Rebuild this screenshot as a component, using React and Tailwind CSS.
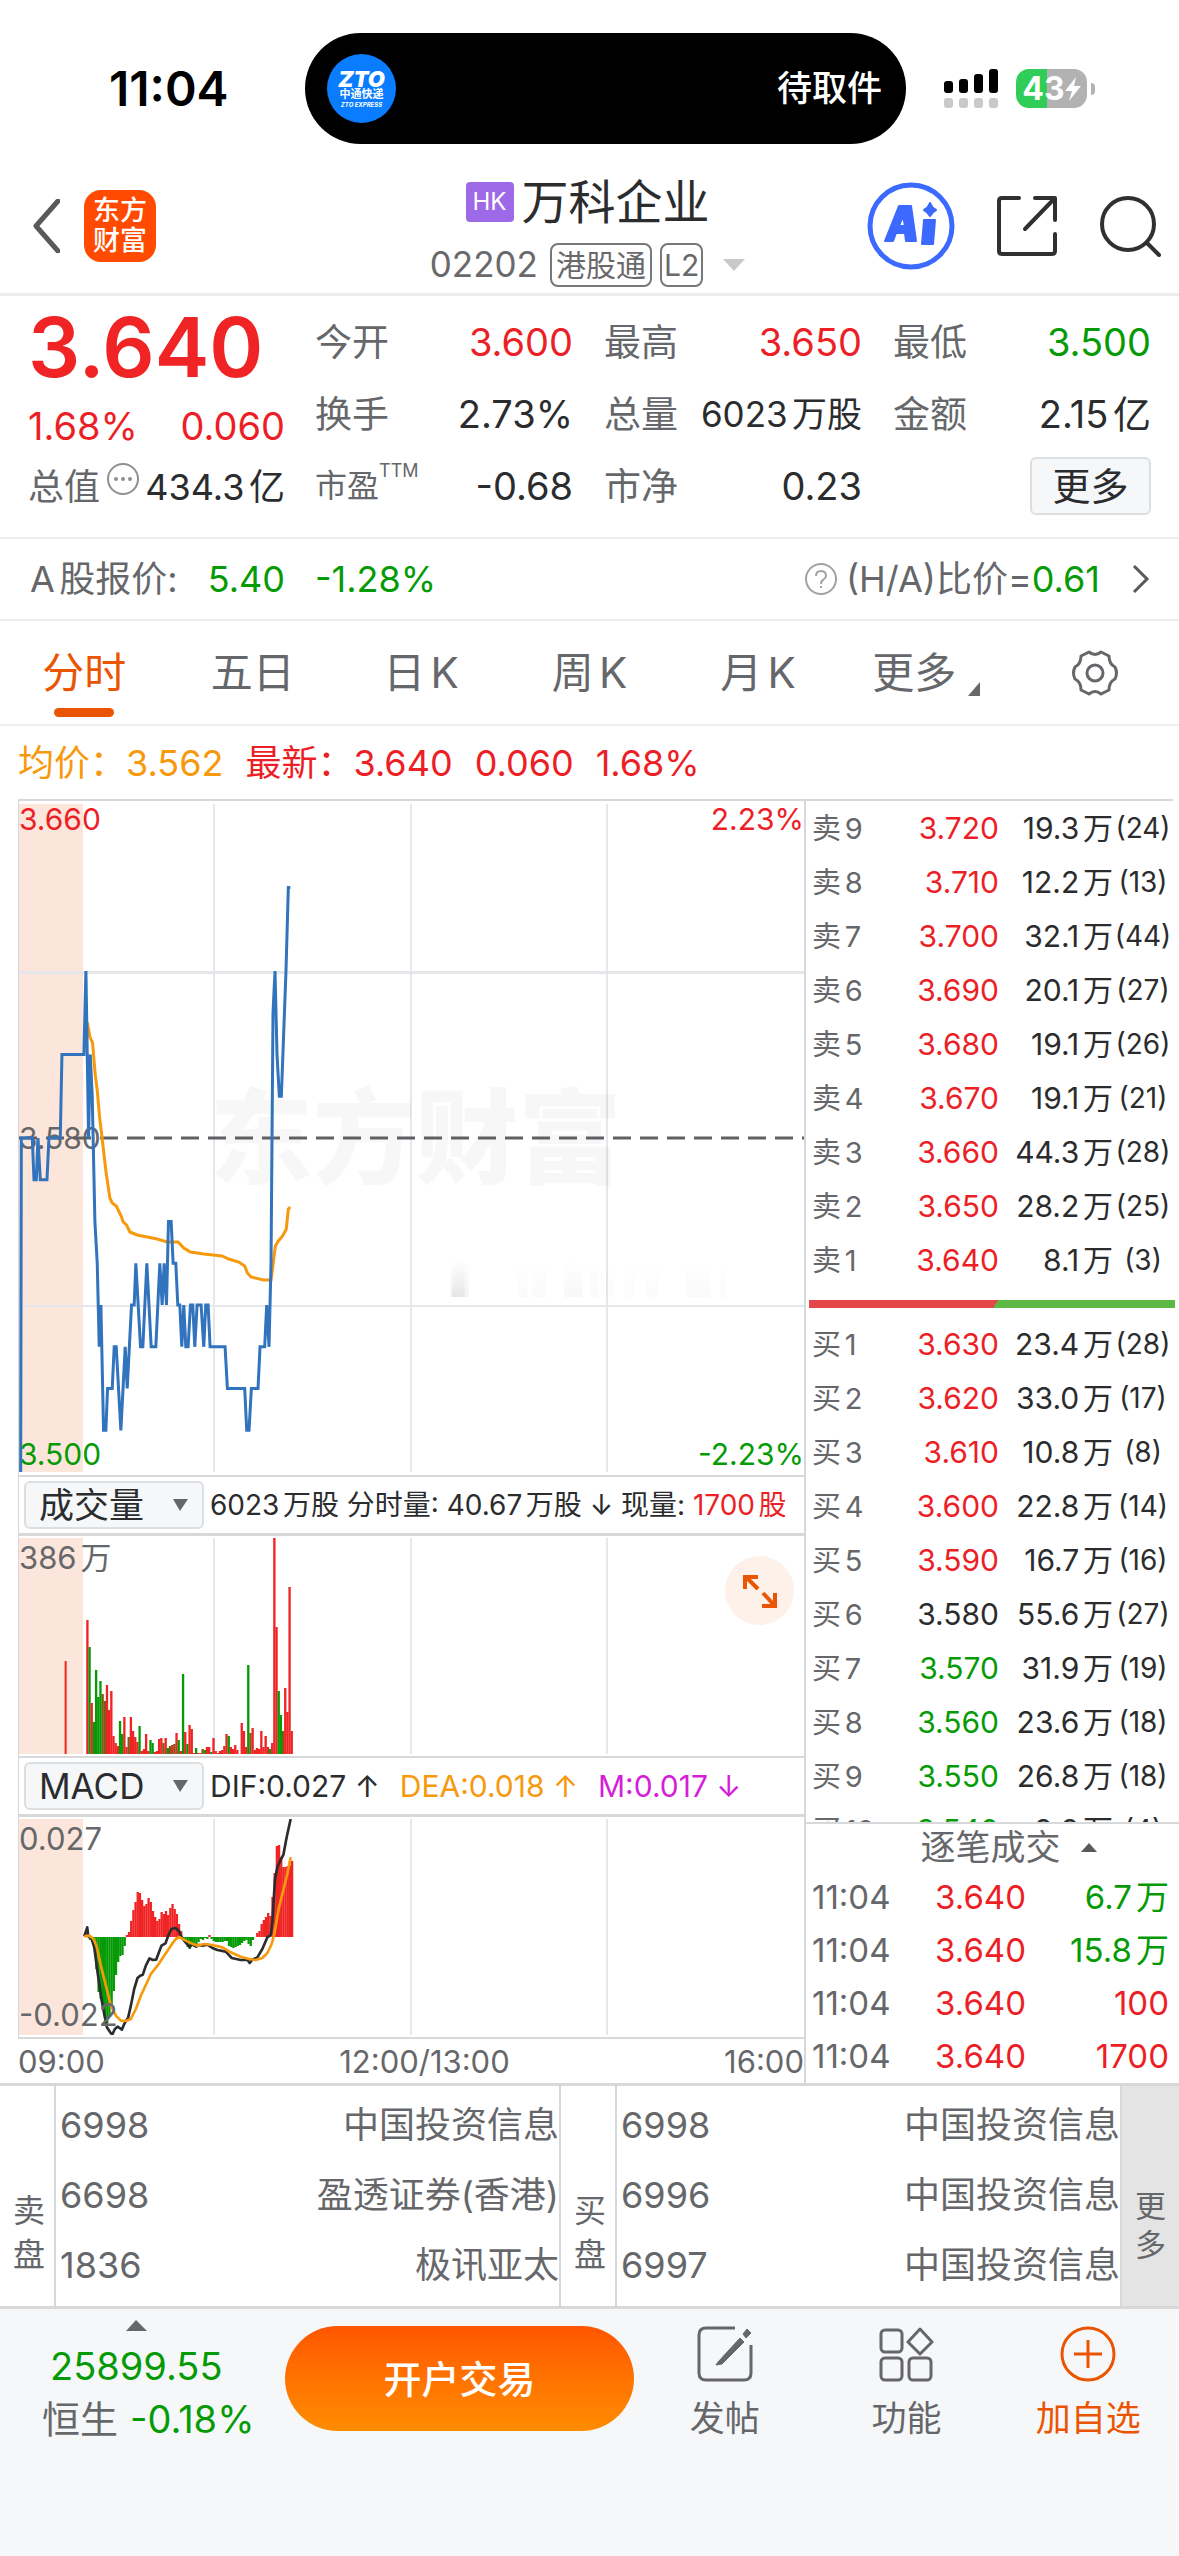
import React, { useState } from "react";

const RED = "#f02424";
const GREEN = "#069b06";
const MIXED = "#7a5c12";
const ORANGE = "#f7990c";

const tones = {
  up: "text-[#ec1f27]",
  down: "text-[#069b06]",
  flat: "text-[#2b2c2e]",
};

const quoteStats = [
  { label: "今开", value: "3.600", tone: "up" },
  { label: "最高", value: "3.650", tone: "up" },
  { label: "最低", value: "3.500", tone: "down" },
  { label: "换手", value: "2.73%", tone: "flat" },
  { label: "总量", value: "6023万股", tone: "flat", small: true },
  { label: "金额", value: "2.15亿", tone: "flat" },
  { label: "市盈", sup: "TTM", value: "-0.68", tone: "flat" },
  { label: "市净", value: "0.23", tone: "flat" },
];

const periods = ["分时", "五日", "日K", "周K", "月K", "更多"];

const sellOrders = [
  ["卖9", "3.720", "19.3万", "(24)", "up"],
  ["卖8", "3.710", "12.2万", "(13)", "up"],
  ["卖7", "3.700", "32.1万", "(44)", "up"],
  ["卖6", "3.690", "20.1万", "(27)", "up"],
  ["卖5", "3.680", "19.1万", "(26)", "up"],
  ["卖4", "3.670", "19.1万", "(21)", "up"],
  ["卖3", "3.660", "44.3万", "(28)", "up"],
  ["卖2", "3.650", "28.2万", "(25)", "up"],
  ["卖1", "3.640", "8.1万", "(3)", "up"],
];

const buyOrders = [
  ["买1", "3.630", "23.4万", "(28)", "up"],
  ["买2", "3.620", "33.0万", "(17)", "up"],
  ["买3", "3.610", "10.8万", "(8)", "up"],
  ["买4", "3.600", "22.8万", "(14)", "up"],
  ["买5", "3.590", "16.7万", "(16)", "up"],
  ["买6", "3.580", "55.6万", "(27)", "flat"],
  ["买7", "3.570", "31.9万", "(19)", "down"],
  ["买8", "3.560", "23.6万", "(18)", "down"],
  ["买9", "3.550", "26.8万", "(18)", "down"],
  ["买10", "3.540", "9.9万", "(4)", "down"],
];

const trades = [
  ["11:04", "3.640", "6.7万", "down"],
  ["11:04", "3.640", "15.8万", "down"],
  ["11:04", "3.640", "100", "up"],
  ["11:04", "3.640", "1700", "up"],
];

const sellBrokers = [
  ["6998", "中国投资信息"],
  ["6698", "盈透证券(香港)"],
  ["1836", "极讯亚太"],
];

const buyBrokers = [
  ["6998", "中国投资信息"],
  ["6996", "中国投资信息"],
  ["6997", "中国投资信息"],
];

// [time offset, price in thousandths]
const pricePoints = [
  [60, 3500], [62, 3580], [95, 3580], [100, 3570], [107, 3570], [112, 3580], [119, 3570],
  [139, 3570], [145, 3580], [179, 3580], [184, 3600], [250, 3600], [256, 3620], [264, 3580],
  [269, 3600], [275, 3590], [283, 3560], [290, 3550], [296, 3530], [301, 3540], [309, 3510],
  [316, 3510], [321, 3520], [335, 3520], [341, 3530], [347, 3530], [361, 3510], [374, 3530],
  [380, 3520], [393, 3540], [401, 3540], [406, 3550], [420, 3530], [427, 3530], [439, 3550],
  [452, 3530], [466, 3530], [478, 3550], [485, 3540], [491, 3550], [498, 3540], [504, 3560],
  [512, 3560], [518, 3550], [526, 3550], [532, 3540], [538, 3540], [544, 3530], [550, 3540],
  [556, 3530], [563, 3530], [570, 3540], [577, 3540], [583, 3530], [590, 3540], [602, 3540],
  [610, 3530], [616, 3540], [623, 3540], [629, 3530], [674, 3530], [681, 3520], [733, 3520],
  [739, 3510], [746, 3510], [753, 3520], [773, 3520], [779, 3530], [793, 3530], [799, 3540],
  [806, 3530], [812, 3550], [818, 3610], [824, 3620], [830, 3600], [837, 3590], [843, 3590],
  [857, 3620], [864, 3640], [870, 3640],
];

const avgLine =
  "260,218 268,233 276,239 284,271 290,286 297,313 306,338 316,367 328,394 335,399 347,402 362,412 368,418 378,421 388,428 410,431 440,433 470,435 500,438 533,438 550,444 570,448 610,450 665,452 685,455 715,458 733,462 741,469 752,473 790,476 812,476 818,461 825,442 834,437 847,432 858,425 864,405 870,403";

// r = up, g = down, m = mixed
const volumes =
  "r134 g107 r51 g32 g84 g57 g73 m60 m53 r69 r44 r63 r18 r11 r8 g33 g20 r37 r7 m17 r37 r23 r17 r12 g28 r3 r5 r20 r3 g14 g11 r2 r3 r15 r16 m11 r16 g6 m8 r9 m10 r21 g14 r3 g80 r22 g10 r29 r25 r1 g6 r1 r1 m5 g4 r7 r7 g2 r16 r3 r1 r3 r4 r8 r20 g18 r7 r5 r9 r4 r0 r31 r23 r7 g89 m21 r26 r4 r6 r5 r23 r7 r18 r7 g5 r11 r216 r127 g63 g39 m23 r66 r42 r167 r23".split(
    " "
  );

const macdBars = [
  6, -3, -5, -12, -32, -55, -62, -72, -80, -86, -80, -68, -54, -38, -25, -19, -18, -9, 2, 5, 16,
  27, 35, 45, 44, 37, 31, 33, 39, 35, 26, 20, 16, 18, 25, 23, 26, 22, 29, 33, 28, 23, 13, 6, -2,
  -6, -10, -12, -9, -10, -8, -5, -2, -3, -1, -2, 2, -2, -4, -5, -5, -5, -5, -4, -4, -9, -10, -11,
  -10, -9, -8, -6, -4, -3, -7, -9, -3, 0, 4, 6, 13, 17, 20, 24, 21, 40, 64, 91, 92, 80, 70, 70,
  71, 72, 76,
];

const difLine =
  "40,412 49,385 52,412 62,418 70,445 80,520 90,590 100,645 108,685 118,700 124,707 132,690 140,683 148,688 153,692 160,675 172,655 180,620 190,570 200,537 208,530 216,527 225,500 236,478 246,483 256,482 265,458 272,440 284,433 293,408 302,390 314,387 325,397 330,410 340,425 356,444 366,435 376,443 385,438 395,440 410,437 425,447 440,453 465,458 483,477 510,483 530,482 537,492 545,482 560,475 575,450 590,415 600,408 605,370 608,320 613,240 620,205 630,182 638,168 648,115 660,60";

const deaLine =
  "40,412 55,410 68,420 78,445 90,500 105,560 120,620 135,650 150,665 165,666 180,660 195,630 210,590 225,558 240,525 260,500 280,470 300,440 315,420 325,414 345,425 360,432 380,440 400,435 425,438 455,445 480,460 510,473 535,480 555,483 575,477 590,462 603,435 612,400 625,325 640,265 650,225 660,175";

const barColor = { r: RED, g: GREEN, m: MIXED };

function StatusBar() {
  return (
    <div className="flex h-[147px] items-center pt-[30px]">
      <div className="w-[305px] pl-[109px] text-[48px] font-semibold leading-none text-black">11:04</div>
      <div className="flex h-[111px] flex-1 items-center justify-between rounded-full bg-black pl-[22px] pr-6">
        <div className="flex size-[69px] flex-col items-center justify-center rounded-full bg-[#0a7cff] text-white">
          <span className="text-[22px] font-black italic leading-[18px]">ZTO</span>
          <span className="text-[11px] font-bold leading-[13px]">中通快递</span>
          <span className="text-[6px] font-bold italic leading-[7px]">ZTO EXPRESS</span>
        </div>
        <span className="text-[35px] font-medium text-white">待取件</span>
      </div>
      <div className="flex w-[273px] items-center gap-[18px] pl-[38px]">
        <svg width="54" height="39" viewBox="0 0 54 39" aria-label="信号">
          <g fill="#000">
            <rect x="0" y="12" width="9" height="12" rx="3" />
            <rect x="15" y="10" width="9" height="14" rx="3" />
            <rect x="30" y="5" width="9" height="19" rx="3" />
            <rect x="45" y="0" width="9" height="24" rx="3" />
          </g>
          <g fill="#c9c9c9">
            <rect x="0" y="29" width="9" height="10" rx="3" />
            <rect x="15" y="29" width="9" height="10" rx="3" />
            <rect x="30" y="29" width="9" height="10" rx="3" />
            <rect x="45" y="29" width="9" height="10" rx="3" />
          </g>
        </svg>
        <div className="flex items-center gap-1">
          <div className="flex h-[39px] w-[71px] items-center justify-center rounded-[13px] bg-[linear-gradient(90deg,#30cd58_44%,#b2b2b2_44%)] text-[32px] font-bold leading-none text-white">
            43
            <svg width="16" height="26" viewBox="0 0 16 26" fill="#fff">
              <path d="M11 1 0 15h7L4 25 16 10H9z" />
            </svg>
          </div>
          <div className="h-3 w-1 rounded-r-full bg-[#b2b2b2]" />
        </div>
      </div>
    </div>
  );
}

function Header() {
  return (
    <header className="grid h-[149px] grid-cols-[1fr_auto_1fr] items-center border-b-[3px] border-[#ededed]">
      <div className="flex items-center gap-6 pl-8 pt-3">
        <button type="button" aria-label="返回">
          <svg width="28" height="54" viewBox="0 0 28 54" fill="none" stroke="#58595b" strokeWidth="5">
            <path d="M26 2 4 27l22 25" strokeLinejoin="round" strokeLinecap="round" />
          </svg>
        </button>
        <div className="flex size-[72px] flex-col items-center justify-center rounded-[17px] bg-[#ff4a00] text-[27px] font-medium leading-[30px] text-white">
          <span>东方</span>
          <span>财富</span>
        </div>
      </div>
      <div className="flex flex-col items-center gap-[19px] pr-1 pt-[26px]">
        <div className="flex h-11 items-center gap-2">
          <span className="flex h-10 w-12 items-center justify-center rounded-[4px] bg-[#9d69e6] text-[24px] text-white">HK</span>
          <h1 className="text-[47px] leading-none text-[#2b2c2e]">万科企业</h1>
        </div>
        <div className="flex h-11 items-center gap-2 text-[35px] leading-none text-[#69696b]">
          <span className="pr-1">02202</span>
          <span className="flex h-11 items-center rounded-[8px] border-2 border-[#77787a] px-1 text-[30px]">港股通</span>
          <span className="flex h-11 items-center rounded-[8px] border-2 border-[#77787a] px-[2px] text-[30px]">L2</span>
          <svg className="ml-3" width="22" height="12" viewBox="0 0 22 12" fill="#c9c9c9">
            <path d="M0 0h22L11 12z" />
          </svg>
        </div>
      </div>
      <div className="flex items-center justify-end gap-[42px] pr-[18px] pt-3">
        <button type="button" aria-label="Ai">
          <svg width="88" height="88" viewBox="0 0 88 88">
            <circle cx="44" cy="44" r="41" fill="none" stroke="#3c69ff" strokeWidth="5" />
            <g fill="#3c69ff" stroke="#3c69ff" strokeWidth="2" strokeLinejoin="round">
              <path
                fillRule="evenodd"
                d="M32 24h12l5 35h-10l-1-8h-9l-3 8H18zM36 34l-4 10h6z"
              />
              <path d="M57 38h11l-2 24H55z" />
              <path d="M63 21q2 5 6 7-4 2-6 6-2-4-6-6 4-2 6-7z" />
            </g>
          </svg>
        </button>
        <button type="button" aria-label="分享">
          <svg width="60" height="60" viewBox="0 0 60 60" fill="none" stroke="#2f3032" strokeWidth="4" strokeLinecap="round" strokeLinejoin="round">
            <path d="M22 2H5Q2 2 2 5v50q0 3 3 3h50q3 0 3-3V38" />
            <path d="M38 2h20v22M57 3 28 33" />
          </svg>
        </button>
        <button type="button" aria-label="搜索">
          <svg width="62" height="62" viewBox="0 0 62 62" fill="none" stroke="#2f3032" strokeWidth="4" strokeLinecap="round">
            <circle cx="29" cy="29" r="26" />
            <path d="m48 48 12 12" />
          </svg>
        </button>
      </div>
    </header>
  );
}

function QuotePanel() {
  return (
    <section className="flex border-b-2 border-[#ededed] px-[28px] pb-[15px] pt-[10px] leading-none">
      <div className="w-[257px] shrink-0">
        <div className="flex h-[84px] items-center text-[82px] font-semibold text-[#f02424]">3.640</div>
        <div className="flex h-[72px] items-center justify-between text-[38px] text-[#ec1f27]">
          <span>1.68%</span>
          <span>0.060</span>
        </div>
        <div className="flex h-[50px] items-center justify-between">
          <span className="text-[36px] text-[#66676a]">总值</span>
          <svg className="mb-4" width="32" height="32" viewBox="0 0 32 32" fill="none" stroke="#8e8f91" strokeWidth="2">
            <circle cx="16" cy="16" r="15" />
            <path d="M9 16h0M16 16h0M23 16h0" strokeWidth="4" strokeLinecap="round" />
          </svg>
          <span className="text-[36px] text-[#2b2c2e]">434.3亿</span>
        </div>
      </div>
      <dl className="ml-[30px] grid flex-1 grid-cols-3 gap-x-[31px]">
        {quoteStats.map((s) => (
          <div key={s.label} className="flex h-[72px] items-center justify-between whitespace-nowrap">
            <dt className={`flex text-[#66676a] ${s.sup ? "text-[32px]" : "text-[37px]"}`}>
              {s.label}
              {s.sup && <span className="-mt-2 text-[18px]">{s.sup}</span>}
            </dt>
            <dd className={`${tones[s.tone]} ${s.small ? "text-[35px]" : "text-[38px]"}`}>{s.value}</dd>
          </div>
        ))}
        <div className="flex h-[72px] items-center justify-end">
          <button type="button" className="h-[58px] w-[121px] rounded-[6px] border-2 border-[#dcdfe2] bg-[#f6f7f9] text-[38px] text-[#2b2c2e]">
            更多
          </button>
        </div>
      </dl>
    </section>
  );
}

function ShareCompare() {
  return (
    <section className="flex h-[82px] items-center justify-between border-b-2 border-[#ededed] pl-[30px] pr-[29px] text-[36px] leading-none">
      <div className="flex gap-[30px]">
        <span className="text-[#66676a]">A股报价:</span>
        <span className="text-[#069b06]">5.40</span>
        <span className="text-[#069b06]">-1.28%</span>
      </div>
      <a href="#compare" className="flex items-center">
        <svg className="mr-2" width="34" height="34" viewBox="0 0 34 34" fill="none" stroke="#a0a1a3" strokeWidth="2">
          <circle cx="17" cy="17" r="15" />
          <path d="M12 14q0-5 5-5t5 5q0 2-3 4-2 1-2 4M17 24v2" />
        </svg>
        <span className="text-[#66676a]">(H/A)比价=</span>
        <span className="text-[#069b06]">0.61</span>
        <svg className="ml-8" width="18" height="30" viewBox="0 0 18 30" fill="none" stroke="#58595b" strokeWidth="3">
          <path d="m2 2 13 13L2 28" />
        </svg>
      </a>
    </section>
  );
}

function PeriodTabs() {
  const [active, setActive] = useState("分时");

  return (
    <nav className="grid h-[105px] grid-cols-7 border-b-2 border-[#ededed] text-[42px] leading-none">
      {periods.map((p) => (
        <button
          key={p}
          type="button"
          onClick={() => setActive(p)}
          className={`relative flex items-center justify-center ${
            active === p ? "text-[#ea5504]" : "text-[#66676a]"
          }`}
        >
          {p}
          {p === "更多" && (
            <svg className="ml-3 mt-8" width="12" height="14" viewBox="0 0 12 14" fill="#66676a">
              <path d="M12 0v14H0z" />
            </svg>
          )}
          {active === p && <span className="absolute bottom-[7px] h-[9px] w-[60px] rounded-full bg-[#ea5504]" />}
        </button>
      ))}
      <button type="button" aria-label="设置" className="flex items-center justify-center">
        <svg width="50" height="46" viewBox="0 0 50 46" fill="none" stroke="#66676a" strokeWidth="3" strokeLinejoin="round">
          <path d="M19 2q6 5 12 0l8 4q0 8 6 11 3 6 0 12-6 3-6 11l-8 4q-6-5-12 0l-8-4q0-8-6-11-3-6 0-12 6-3 6-11z" />
          <circle cx="25" cy="23" r="8" />
        </svg>
      </button>
    </nav>
  );
}

function GridLines() {
  return (
    <div className="absolute inset-0 grid grid-cols-4">
      <div className="border-r-2 border-[#e6e7ea]" />
      <div className="border-r-2 border-[#e6e7ea]" />
      <div className="border-r-2 border-[#e6e7ea]" />
    </div>
  );
}

function PriceChart() {
  const points = pricePoints.map(([x, p]) => `${x},${((3660 - p) * 4.175).toFixed(1)}`).join(" ");

  return (
    <div className="py-[3px]">
      <div className="relative h-[668px] text-[30px] leading-none">
        <div className="absolute inset-y-0 left-0 w-[64px] bg-[#fce6db]" />
        <GridLines />
        <div className="absolute inset-x-0 top-1/4 border-t-[3px] border-[#e6e7ea]" />
        <div className="absolute inset-x-0 top-3/4 border-t-2 border-[#e6e7ea]" />
        <div className="absolute inset-x-0 top-1/2 flex -translate-y-1/2 justify-center pl-2 text-[103px] font-black text-black/3">
          东方财富
        </div>
        <svg className="absolute inset-0 h-full w-full" viewBox="0 0 786 668" preserveAspectRatio="none">
          <defs>
            <linearGradient id="smear" x1="0" y1="0" x2="0" y2="1">
              <stop offset="0" stopColor="#000" stopOpacity="0" />
              <stop offset="1" stopColor="#000" stopOpacity="0.05" />
            </linearGradient>
          </defs>
          <g fill="url(#smear)">
            <rect x="432" y="456" width="18" height="37" />
            <rect x="434" y="456" width="12" height="37" />
            <rect x="500" y="456" width="9" height="37" opacity="0.4" />
            <rect x="514" y="456" width="14" height="37" opacity="0.4" />
            <rect x="546" y="456" width="18" height="37" opacity="0.6" />
            <rect x="572" y="456" width="8" height="37" opacity="0.4" />
            <rect x="588" y="456" width="8" height="37" opacity="0.3" />
            <rect x="606" y="456" width="10" height="37" opacity="0.3" />
            <rect x="628" y="456" width="12" height="37" opacity="0.3" />
            <rect x="668" y="456" width="24" height="37" opacity="0.4" />
            <rect x="702" y="456" width="6" height="37" opacity="0.4" />
          </g>
        </svg>
        <span className="absolute left-0 top-0 text-[#ec1f27]">3.660</span>
        <span className="absolute right-0 top-0 text-[#ec1f27]">2.23%</span>
        <span className="absolute left-0 top-1/2 -translate-y-1/2 text-[#66676a]">3.580</span>
        <span className="absolute bottom-[3px] left-0 text-[#069b06]">3.500</span>
        <span className="absolute bottom-[3px] right-0 text-[#069b06]">-2.23%</span>
        <svg className="absolute inset-0 h-full w-full" viewBox="55 0 2358 668" preserveAspectRatio="none" fill="none">
          <path d="M55 334H2413" stroke="#5f6063" strokeWidth="3" strokeDasharray="18 9" vectorEffect="non-scaling-stroke" />
          <polyline points={avgLine} stroke={ORANGE} strokeWidth="3" vectorEffect="non-scaling-stroke" />
          <polyline points={points} stroke="#3173bd" strokeWidth="3" vectorEffect="non-scaling-stroke" />
        </svg>
      </div>
    </div>
  );
}

function VolumeChart() {
  return (
    <div className="py-[2px]">
      <div className="relative h-[216px] text-[32px] leading-none">
        <div className="absolute inset-y-0 left-0 w-[64px] bg-[#fce6db]" />
        <GridLines />
        <svg className="absolute inset-0 h-full w-full" viewBox="0 0 2358 216" preserveAspectRatio="none">
          <rect x="137" y="123" width="6" height="93" fill={RED} />
          {volumes.map((v, i) => {
            const h = Number(v.slice(1));
            return <rect key={i} x={202 + i * 6.53} y={216 - h} width="7" height={h} fill={barColor[v[0]]} />;
          })}
        </svg>
        <span className="absolute left-0 top-1 text-[31px] text-[#66676a]">386万</span>
        <button
          type="button"
          aria-label="全屏"
          className="absolute right-[10px] top-[18px] flex size-[69px] items-center justify-center rounded-full bg-[#fdf1ea]"
        >
          <svg width="36" height="36" viewBox="0 0 36 36" fill="none" stroke="#ea5504" strokeWidth="4">
            <path d="M3 16V4h13M4 4l12 12M33 20v13H20M33 33 21 20" />
          </svg>
        </button>
      </div>
    </div>
  );
}

function MacdChart() {
  return (
    <div className="py-[2px]">
      <div className="relative h-[216px] text-[31px] leading-none">
        <div className="absolute inset-y-0 left-0 w-[64px] bg-[#fce6db]" />
        <GridLines />
        <svg className="absolute inset-0 h-full w-full" viewBox="-156 60 2358 648" preserveAspectRatio="none" fill="none">
          {macdBars.map((v, i) => (
            <rect
              key={i}
              x={47 + i * 6.53}
              y={v > 0 ? 414 - v * 3 : 414}
              width="7"
              height={Math.abs(v) * 3}
              fill={v > 0 ? RED : GREEN}
            />
          ))}
          <polyline points={difLine} stroke="#2b2c2e" strokeWidth="8" strokeLinejoin="round" />
          <polyline points={deaLine} stroke={ORANGE} strokeWidth="8" strokeLinejoin="round" />
        </svg>
        <span className="absolute left-0 top-1 text-[#66676a]">0.027</span>
        <span className="absolute bottom-[5px] left-0 text-[#66676a]">-0.022</span>
      </div>
    </div>
  );
}

function IndicatorBar({ label, options, children }) {
  return (
    <div className="flex h-[61px] items-center border-b-[3px] border-t-2 border-[#d6d8da] pl-[5px]">
      <div className="relative mr-[6px] shrink-0">
        <select
          aria-label={label}
          defaultValue={options[0]}
          className="h-12 w-[180px] appearance-none rounded-[6px] border-2 border-[#dcdfe2] bg-[#f6f7f9] pl-[13px] text-[35px] leading-none text-[#2b2c2e]"
        >
          {options.map((o) => (
            <option key={o}>{o}</option>
          ))}
        </select>
        <svg className="pointer-events-none absolute right-4 top-[18px]" width="15" height="12" viewBox="0 0 15 12" fill="#66676a">
          <path d="M0 0h15L7 12z" />
        </svg>
      </div>
      {children}
    </div>
  );
}

function Charts() {
  return (
    <div className="min-w-0 flex-1 pl-[18px]">
      <div className="border-l border-t-2 border-[#d6d8da]">
        <PriceChart />
        <IndicatorBar label="副图一" options={["成交量", "MACD"]}>
          <div className="flex whitespace-nowrap text-[28px] leading-none text-[#2b2c2e]">
            <span>6023万股 分时量: 40.67万股 ↓ 现量:&nbsp;</span>
            <span className="text-[#ec1f27]">1700股</span>
          </div>
        </IndicatorBar>
        <VolumeChart />
        <IndicatorBar label="副图二" options={["MACD", "成交量"]}>
          <div className="flex gap-5 whitespace-nowrap text-[30px] leading-none text-[#2b2c2e]">
            <span>DIF:0.027 ↑</span>
            <span className="text-[#f7990c]">DEA:0.018 ↑</span>
            <span className="text-[#d41fd9]">M:0.017 ↓</span>
          </div>
        </IndicatorBar>
        <MacdChart />
      </div>
      <div className="flex h-[46px] items-center justify-between border-t-2 border-[#d6d8da] text-[31px] leading-none text-[#66676a]">
        <span>09:00</span>
        <span className="pl-5">12:00/13:00</span>
        <span>16:00</span>
      </div>
    </div>
  );
}

function OrderRows({ rows }) {
  return (
    <table className="w-full table-fixed text-[30px] leading-none">
      <tbody>
        {rows.map(([label, price, volume, count, tone]) => (
          <tr key={label} className="h-[54px]">
            <td className="w-[70px] whitespace-nowrap pl-[6px] text-[29px] text-[#66676a]">{label}</td>
            <td className={`text-right ${tones[tone]}`}>{price}</td>
            <td className="w-[114px] whitespace-nowrap text-right text-[#2b2c2e]">{volume}</td>
            <td className="w-[60px] text-center text-[28px] text-[#2b2c2e]">{count}</td>
          </tr>
        ))}
      </tbody>
    </table>
  );
}

function OrderBook() {
  return (
    <div className="w-[375px] shrink-0 border-l-2 border-[#d6d8da]">
      <div className="h-[1023px] overflow-hidden pr-[6px]">
        <div className="border-t-2 border-[#d6d8da]" />
        <OrderRows rows={sellOrders} />
        <div className="-mr-[2px] mb-[9px] ml-[3px] mt-[13px] h-2 bg-[linear-gradient(120deg,#e4474a_51%,#5bb944_51%)]" />
        <OrderRows rows={buyOrders} />
      </div>
      <div className="border-t-2 border-[#d6d8da]">
        <button type="button" className="flex h-[47px] w-full items-center justify-center gap-5 pl-8 text-[35px] leading-none text-[#66676a]">
          逐笔成交
          <svg width="16" height="9" viewBox="0 0 16 9" fill="#58595b">
            <path d="M0 9h16L8 0z" />
          </svg>
        </button>
        <table className="w-full table-fixed text-[33px] leading-none">
          <tbody>
            {trades.map(([time, price, amount, tone], i) => (
              <tr key={i} className="h-[53px]">
                <td className="w-[92px] pl-[6px] text-[#66676a]">{time}</td>
                <td className="w-[128px] text-right text-[#ec1f27]">{price}</td>
                <td className={`pr-[10px] text-right ${tones[tone]}`}>{amount}</td>
              </tr>
            ))}
          </tbody>
        </table>
      </div>
    </div>
  );
}

function BrokerList({ title, rows }) {
  return (
    <div className="flex flex-1">
      <div className="flex w-14 shrink-0 flex-col items-center justify-center border-r-2 border-[#d6d8da] pl-1 pt-[74px] text-[32px] leading-[44px]">
        {[...title].map((c) => (
          <span key={c}>{c}</span>
        ))}
      </div>
      <ul className="flex flex-1 flex-col border-r-2 border-[#d6d8da] pl-1 pt-1">
        {rows.map(([id, name]) => (
          <li key={id} className="flex h-[70px] items-center justify-between">
            <span>{id}</span>
            <span>{name}</span>
          </li>
        ))}
      </ul>
    </div>
  );
}

function Brokers() {
  return (
    <section className="flex h-[226px] border-b-[3px] border-t-[3px] border-[#d6d8da] text-[36px] leading-none text-[#66676a]">
      <BrokerList title="卖盘" rows={sellBrokers} />
      <BrokerList title="买盘" rows={buyBrokers} />
      <button type="button" className="flex w-[57px] shrink-0 flex-col items-center justify-center bg-[#e4e4e4] pt-[58px] text-[31px] leading-[39px]">
        <span>更</span>
        <span>多</span>
      </button>
    </section>
  );
}

function BottomBar() {
  return (
    <footer className="flex flex-1 bg-[#f6f7f9] leading-none text-[#66676a]">
      <div className="flex w-[285px] shrink-0 flex-col items-start pl-[42px] pt-[11px] text-[38px]">
        <div className="flex flex-col items-center gap-[16px] pl-2 text-[#069b06]">
          <svg width="21" height="11" viewBox="0 0 21 11" fill="#66676a">
            <path d="M0 11h21L10 0z" />
          </svg>
          <span>25899.55</span>
        </div>
        <div className="mt-[15px] flex gap-3 whitespace-nowrap">
          <span>恒生</span>
          <span className="text-[#069b06]">-0.18%</span>
        </div>
      </div>
      <button
        type="button"
        className="mt-[17px] h-[105px] w-[349px] shrink-0 rounded-full bg-linear-to-b from-[#ff5500] to-[#ff8c00] text-[38px] font-medium text-white"
      >
        开户交易
      </button>
      <div className="grid flex-1 grid-cols-3 items-start pt-[17px] text-[35px]">
        <button type="button" className="flex flex-col items-center gap-[19px]">
          <svg width="56" height="56" viewBox="0 0 56 56" fill="none" stroke="#66676a" strokeWidth="3">
            <path d="M38 2H9Q2 2 2 9v38q0 7 7 7h38q7 0 7-7V19" />
            <path d="m21 36 22-24 4 4-22 22-6 1zM46 8l4-5 4 4-5 5z" fill="#66676a" strokeWidth="1" />
          </svg>
          发帖
        </button>
        <button type="button" className="flex flex-col items-center gap-[19px]">
          <svg width="56" height="56" viewBox="0 0 56 56" fill="none" stroke="#66676a" strokeWidth="3">
            <rect x="3" y="4" width="21" height="22" rx="4" />
            <rect x="3" y="32" width="21" height="22" rx="4" />
            <rect x="31" y="32" width="22" height="22" rx="4" />
            <path d="m42 3 12 13-12 12-12-12z" strokeLinejoin="round" />
          </svg>
          功能
        </button>
        <button type="button" className="flex flex-col items-center gap-[19px] text-[#ea5504]">
          <svg width="56" height="56" viewBox="0 0 56 56" fill="none" stroke="#ea5504" strokeWidth="3">
            <circle cx="28" cy="28" r="26" />
            <path d="M28 14v28M14 28h28" />
          </svg>
          加自选
        </button>
      </div>
    </footer>
  );
}

export default function App() {
  return (
    <div className="flex min-h-screen flex-col bg-white font-['Inter','Noto_Sans_CJK_SC',sans-serif] [text-autospace:normal]">
      <StatusBar />
      <Header />
      <QuotePanel />
      <ShareCompare />
      <PeriodTabs />
      <div className="flex h-[73px] items-center pl-[18px] text-[36px] leading-none text-[#ec1f27]">
        <span className="text-[#f7990c]">均价：</span>
        <span className="mr-[22px] text-[#f7990c]">3.562</span>
        <span>最新：</span>
        <span className="mr-[22px]">3.640</span>
        <span className="mr-[22px]">0.060</span>
        <span>1.68%</span>
      </div>
      <main className="flex">
        <Charts />
        <OrderBook />
      </main>
      <Brokers />
      <BottomBar />
    </div>
  );
}
